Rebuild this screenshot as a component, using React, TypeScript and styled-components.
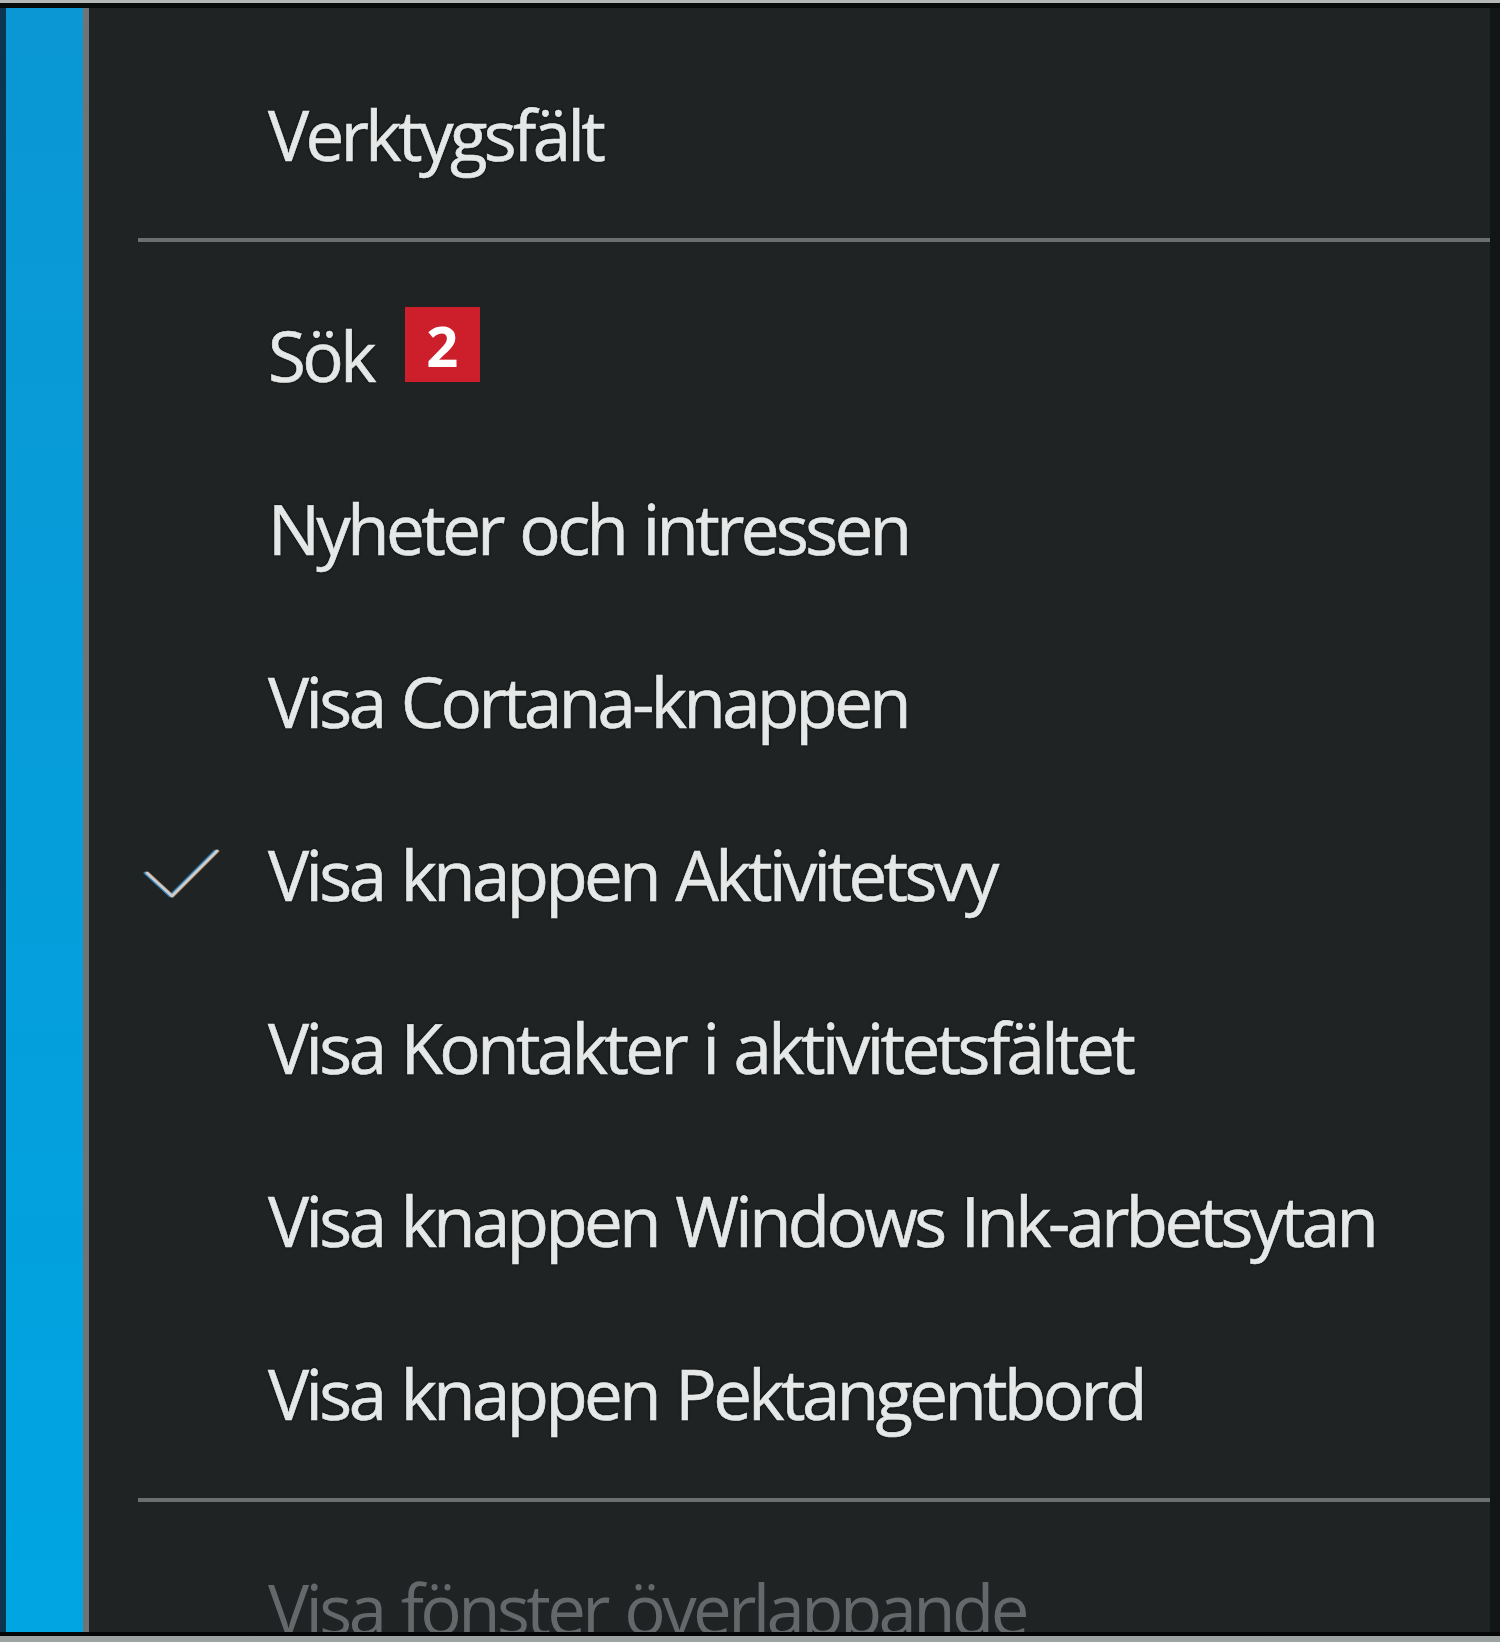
import React from "react";
import styled, { createGlobalStyle } from "styled-components";

const Global = createGlobalStyle`
  html, body { margin: 0; padding: 0; }
  body {
    width: 1500px;
    height: 1642px;
    overflow: hidden;
    background: #a3a8a8;
    font-family: "Open Sans", "Noto Sans", sans-serif;
  }
`;

const Screen = styled.div`
  width: 1500px;
  height: 1642px;
  padding-top: 3px;
  padding-bottom: 6px;
  box-sizing: border-box;
  background: linear-gradient(#b4b8b8, #9da2a2);
`;

const Window = styled.div`
  height: 100%;
  box-sizing: border-box;
  border-top: 5px solid #0a0c0c;
  border-bottom: 4px solid #050606;
  display: flex;
  overflow: hidden;
`;

const EdgeStrip = styled.div`
  width: 6px;
  background: #0b3550;
  flex: none;
`;

const AccentStrip = styled.div`
  width: 77px;
  flex: none;
  background: linear-gradient(#0a97d4, #049fdc 60%, #00a5e2);
`;

const DividerStrip = styled.div`
  width: 6px;
  flex: none;
  background: #6f7576;
`;

const Panel = styled.div`
  flex: 1;
  background: #1f2324;
  display: flex;
  flex-direction: column;
  padding-top: 39px;
  overflow: hidden;
`;

const RightEdge = styled.div`
  width: 10px;
  flex: none;
  background: #111515;
`;

const Row = styled.div<{ $disabled?: boolean }>`
  height: 173px;
  flex: none;
  display: grid;
  grid-template-columns: 179px auto;
  align-items: center;
  color: ${(p) => (p.$disabled ? "#65686a" : "#e6e8e8")};
  font-size: 69px;
  letter-spacing: -3.6px;
  word-spacing: 3px;
  white-space: nowrap;
  -webkit-text-stroke: ${(p) => (p.$disabled ? "0" : "0.6px #e6e8e8")};
  text-shadow: ${(p) => (p.$disabled ? "none" : "0 0 3px rgba(0,0,0,0.9)")};
`;

const CheckCell = styled.div`
  padding-left: 56px;
  display: flex;
  align-items: center;
  height: 100%;
  svg {
    filter: drop-shadow(-1.5px 0 0 rgba(40, 150, 230, 0.7))
      drop-shadow(1.5px 0 0 rgba(230, 140, 60, 0.6));
  }
`;

const Label = styled.span`
  display: flex;
  align-items: center;
  gap: 32px;
`;

const Badge = styled.span`
  width: 75px;
  height: 75px;
  background: #cc1f2b;
  color: #ffffff;
  font-weight: 700;
  font-size: 56px;
  letter-spacing: 0;
  -webkit-text-stroke: 0;
  display: inline-flex;
  align-items: center;
  justify-content: center;
  text-shadow: none;
  margin-top: -20px;
`;

const Separator = styled.div<{ $top: number; $bottom: number }>`
  flex: none;
  height: 4px;
  margin: ${(p) => p.$top}px 0 ${(p) => p.$bottom}px 49px;
  background: #6b6f70;
`;

const Check = () => (
  <svg width="74" height="52" viewBox="0 0 74 52" fill="none">
    <path
      d="M2 25 L27 48 L72 3"
      stroke="#c9cdd0"
      strokeWidth="3"
      strokeLinecap="round"
      strokeLinejoin="round"
    />
  </svg>
);

type Item = { label: string; checked?: boolean; badge?: string };

const main: Item[] = [
  { label: "Sök", badge: "2" },
  { label: "Nyheter och intressen" },
  { label: "Visa Cortana-knappen" },
  { label: "Visa knappen Aktivitetsvy", checked: true },
  { label: "Visa Kontakter i aktivitetsfältet" },
  { label: "Visa knappen Windows Ink-arbetsytan" },
  { label: "Visa knappen Pektangentbord" },
];

export default function App() {
  return (
    <>
      <Global />
      <Screen>
        <Window>
          <EdgeStrip />
          <AccentStrip />
          <DividerStrip />
          <Panel>
            <Row>
              <CheckCell />
              <Label>Verktygsfält</Label>
            </Row>
            <Separator $top={18} $bottom={26} />
            {main.map((it) => (
              <Row key={it.label}>
                <CheckCell>{it.checked && <Check />}</CheckCell>
                <Label>
                  {it.label}
                  {it.badge && <Badge>{it.badge}</Badge>}
                </Label>
              </Row>
            ))}
            <Separator $top={19} $bottom={19} />
            <Row $disabled>
              <CheckCell />
              <Label>Visa fönster överlappande</Label>
            </Row>
          </Panel>
          <RightEdge />
        </Window>
      </Screen>
    </>
  );
}
